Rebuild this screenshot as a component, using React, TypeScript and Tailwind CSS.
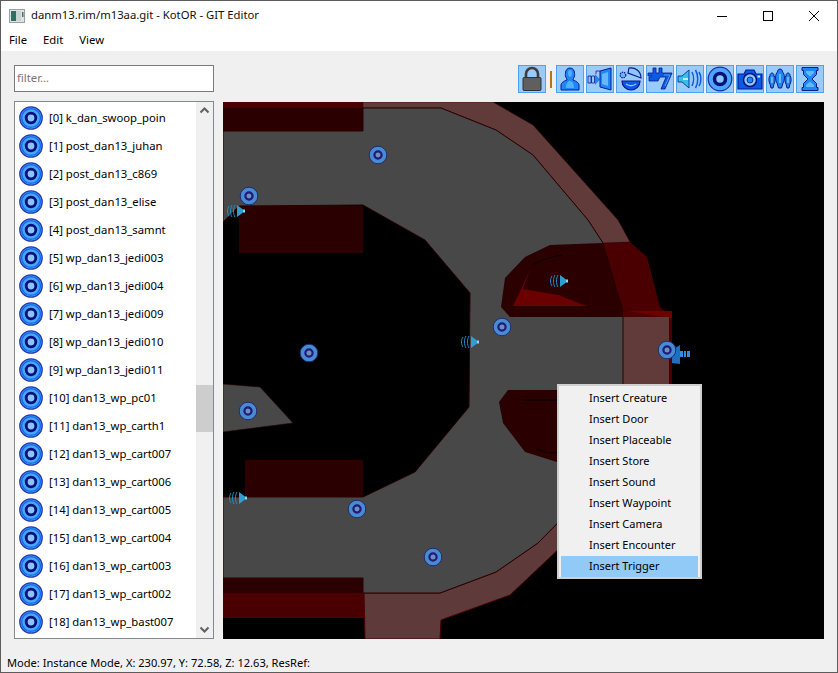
import { FC, ReactNode } from "react";

const rows = [
  "[0] k_dan_swoop_poin",
  "[1] post_dan13_juhan",
  "[2] post_dan13_c869",
  "[3] post_dan13_elise",
  "[4] post_dan13_samnt",
  "[5] wp_dan13_jedi003",
  "[6] wp_dan13_jedi004",
  "[7] wp_dan13_jedi009",
  "[8] wp_dan13_jedi010",
  "[9] wp_dan13_jedi011",
  "[10] dan13_wp_pc01",
  "[11] dan13_wp_carth1",
  "[12] dan13_wp_cart007",
  "[13] dan13_wp_cart006",
  "[14] dan13_wp_cart005",
  "[15] dan13_wp_cart004",
  "[16] dan13_wp_cart003",
  "[17] dan13_wp_cart002",
  "[18] dan13_wp_bast007",
];

const menuItems = [
  "Insert Creature",
  "Insert Door",
  "Insert Placeable",
  "Insert Store",
  "Insert Sound",
  "Insert Waypoint",
  "Insert Camera",
  "Insert Encounter",
  "Insert Trigger",
];

const waypoints = [
  [378, 155],
  [249, 196],
  [502, 327],
  [309, 353],
  [248, 411],
  [357, 509],
  [433, 557],
];

const sounds = [
  [235, 211],
  [469, 342],
  [558, 281],
  [237, 498],
];

const NAVY = "#0a1a8c";
const BLUE = "#0a5ae6";
const MID = "#1e86f5";
const LIGHT = "#4aa6f8";
const PALE = "#8cc8fb";

const Ring: FC<{ size: number }> = ({ size }) => (
  <svg width={size} height={size} viewBox="0 0 24 24">
    <circle cx="12" cy="12" r="11.2" fill={LIGHT} stroke="#2a3ab0" strokeWidth="1.3" />
    <circle cx="12" cy="12" r="9.4" fill="none" stroke="#0f6cf0" strokeWidth="1.4" />
    <circle cx="12" cy="12" r="4.8" fill="#8cc4fa" stroke="#00107a" strokeWidth="2.8" />
  </svg>
);

const ToolIcon: FC<{ children: ReactNode }> = ({ children }) => (
  <button className="flex h-[28px] w-[28px] items-center justify-center border border-[#4ba3f7] bg-[#9acbf8]">
    <svg width="26" height="26" viewBox="0 0 26 26">
      {children}
    </svg>
  </button>
);

const App: FC = () => {
  return (
    <div className="flex h-[673px] w-[838px] flex-col overflow-hidden border border-[#5c5c5c] bg-[#f0f0f0] text-[11.3px] text-black [font-family:'Noto_Sans',sans-serif]">
      {/* Title bar */}
      <div className="flex h-[29px] shrink-0 items-center bg-white">
        <svg width="16" height="14" viewBox="0 0 16 14" className="ml-[8px]">
          <rect x="0.5" y="0.5" width="15" height="13" fill="#dfe3e3" stroke="#9aa0a0" />
          <rect x="2" y="2" width="5" height="10" fill="#2f6f66" />
          <rect x="7" y="2" width="5" height="10" fill="#c7d3d0" />
          <rect x="13" y="3" width="1.5" height="5" fill="#47736b" />
        </svg>
        <span className="ml-[6px] text-[#101010]">danm13.rim/m13aa.git - KotOR - GIT Editor</span>
        <div className="ml-auto flex h-full">
          <div className="flex w-[46px] items-center justify-center">
            <svg width="10" height="10" viewBox="0 0 10 10">
              <path d="M0 5.5H10" stroke="#000" />
            </svg>
          </div>
          <div className="flex w-[46px] items-center justify-center">
            <svg width="10" height="10" viewBox="0 0 10 10">
              <rect x="0.5" y="0.5" width="9" height="9" fill="none" stroke="#000" />
            </svg>
          </div>
          <div className="flex w-[46px] items-center justify-center">
            <svg width="10" height="10" viewBox="0 0 10 10">
              <path d="M0 0 10 10M10 0 0 10" stroke="#000" />
            </svg>
          </div>
        </div>
      </div>

      {/* Menu bar */}
      <div className="flex h-[21px] shrink-0 items-center gap-[16px] bg-white pl-[8px]">
        <span>File</span>
        <span>Edit</span>
        <span>View</span>
      </div>

      <div className="flex min-h-0 flex-1 gap-[9px] pl-[13px] pr-[13px] pt-[14px]">
        {/* Left column */}
        <div className="flex w-[200px] shrink-0 flex-col gap-[9px]">
          <div className="flex h-[27px] items-center border border-[#7a7a7a] bg-white pl-[2px] text-[#757575]">
            filter…
          </div>
          <div className="flex h-[538px] border border-[#828790] bg-white">
            <div className="flex-1 overflow-hidden pl-[4px] pt-[2px]">
              {rows.map((row) => (
                <div key={row} className="flex h-[28px] items-center gap-[6px]">
                  <Ring size={24} />
                  <span className="whitespace-nowrap">{row}</span>
                </div>
              ))}
            </div>
            <div className="relative w-[17px] bg-[#f0f0f0]">
              <svg width="17" height="17" viewBox="0 0 17 17">
                <path d="M4.5 10.5 8.5 6.5 12.5 10.5" fill="none" stroke="#606060" strokeWidth="2" />
              </svg>
              <div className="absolute left-0 top-[283px] h-[47px] w-full bg-[#cdcdcd]" />
              <svg width="17" height="17" viewBox="0 0 17 17" className="absolute bottom-0 left-0">
                <path d="M4.5 6.5 8.5 10.5 12.5 6.5" fill="none" stroke="#606060" strokeWidth="2" />
              </svg>
            </div>
          </div>
        </div>

        {/* Right column */}
        <div className="flex w-[601px] shrink-0 flex-col gap-[9px]">
          <div className="flex h-[28px] items-center justify-end gap-[2px]">
            <ToolIcon>
              <path d="M7 12V8a6 6 0 0 1 12 0v4" fill="none" stroke="#3d3d3d" strokeWidth="2.6" />
              <rect x="4" y="11.5" width="18" height="13" rx="1" fill="#5f5f5f" stroke="#333" />
            </ToolIcon>
            <div className="mx-[2px] h-[17px] w-[2px] bg-[#b8720f]" />
            {/* Creature */}
            <ToolIcon>
              <path d="M4 24v-5c0-2 3-4 6-5 0-1-1-2-1.500-4-.5-1 0-2 0-3 0-3 2-5 4.500-5s4.500 2 4.500 5c0 1 .5 2 0 3-.5 2-1.500 3-1.500 4 3 1 6 3 6 5v5z" fill={MID} stroke={NAVY} strokeWidth="1" />
              <path d="M9 22c0-5 2-7 4-7s4 2 4 7zM11 7c0-2 1-3 2-3s2 1 2 3-1 4-2 4-2-2-2-4z" fill="#4fb0fb" />
            </ToolIcon>
            {/* Door */}
            <ToolIcon>
              <path d="M1 10h3v7H1zM4.500 10h3v7h-3z" fill={PALE} stroke={NAVY} strokeWidth="0.8" />
              <path d="M8 8l5 5.500-5 5.500z" fill={MID} />
              <path d="M13 5 24 2v22l-11-3z" fill={MID} stroke={NAVY} strokeWidth="1" />
              <path d="M15 8l6-2v14l-6-2z" fill="#66b8fb" />
              <path d="M9 5h4M9 5v3" fill="none" stroke={NAVY} strokeWidth="0.8" />
            </ToolIcon>
            {/* Placeable */}
            <ToolIcon>
              <path d="M5 15h18c0 5-4 9-9 9s-9-4-9-9z" fill={BLUE} stroke={NAVY} strokeWidth="1.2" />
              <path d="M12 2c6-1 12 3 12 10L11 7z" fill={PALE} stroke={NAVY} strokeWidth="1.2" />
              <circle cx="6" cy="9" r="2.800" fill="#66b8fb" stroke={NAVY} strokeWidth="1.200" strokeDasharray="1.500 0.800" />
              <path d="M9 18c3 2 7 2 10 0" fill="none" stroke={PALE} strokeWidth="1.500" />
            </ToolIcon>
            {/* Store */}
            <ToolIcon>
              <path d="M6 2h3v5h3V2h3v5h10l-7 16h-4l5-12h-6l-2 4H2v-4h2l1-1H1V7h5z" fill={BLUE} stroke={NAVY} strokeWidth="0.8" />
              <path d="M17 9h6l-5 11" fill="none" stroke={LIGHT} strokeWidth="1" />
            </ToolIcon>
            {/* Sound */}
            <ToolIcon>
              <path d="M1 10h4l7-6v18l-7-6H1z" fill="#35c0ea" stroke={NAVY} strokeWidth="0.8" />
              <path d="M6 13h5" stroke="#bdf0ff" strokeWidth="2" />
              <path d="M15 6c2 4 2 10 0 14M18.500 4c3 5 3 13 0 18M22 6c2.500 4 2.500 10 0 14" fill="none" stroke={BLUE} strokeWidth="1.500" />
            </ToolIcon>
            {/* Waypoint */}
            <ToolIcon>
              <circle cx="13" cy="13" r="11.800" fill={LIGHT} stroke="#1a2ca0" strokeWidth="1.200" />
              <circle cx="13" cy="13" r="5.500" fill={PALE} stroke="#00107a" strokeWidth="3.500" />
            </ToolIcon>
            {/* Camera */}
            <ToolIcon>
              <path d="M1 8h6l2-4h8l2 4h6v15H1z" fill={BLUE} stroke={NAVY} strokeWidth="1.200" />
              <circle cx="13" cy="14" r="6.500" fill={PALE} stroke="#00107a" strokeWidth="1.500" />
              <circle cx="13" cy="14" r="3" fill={MID} stroke={NAVY} strokeWidth="0.800" />
              <rect x="20.500" y="9.500" width="2.500" height="2" fill="#d8ecff" />
            </ToolIcon>
            {/* Encounter */}
            <ToolIcon>
              <path d="M13 3c1.500 0 2.500 1.500 2.500 3 2.500 2 2.500 8 .5 11l-1.500 5h-3L10 17c-2-3-2-9 .5-11 0-1.500 1-3 2.500-3z" fill={MID} stroke={NAVY} strokeWidth="1" />
              <path d="M5 7c1 0 2 1 2 2.500 1.500 2 1.500 6 0 8.500l-1 4H4l-1-4c-1.500-2.500-1.500-6.500 0-8.500C3 8 4 7 5 7zM21 7c1 0 2 1 2 2.500 1.500 2 1.500 6 0 8.500l-1 4h-2l-1-4c-1.500-2.500-1.500-6.500 0-8.500C19 8 20 7 21 7z" fill={MID} stroke={NAVY} strokeWidth="1" />
              <path d="M13 8v9M5 11v6M21 11v6" stroke={PALE} strokeWidth="1.500" />
            </ToolIcon>
            {/* Trigger */}
            <ToolIcon>
              <path d="M5 1.500h16v3h-1.500v4L15 13l4.500 4.500v4H21v3H5v-3h1.500v-4L11 13 6.500 8.500v-4H5z" fill={MID} stroke={NAVY} strokeWidth="1" />
              <path d="M9 5h8v2l-4 3.500L9 7zM9 21v-2l4-3.500 4 3.500v2z" fill="#66b8fb" />
            </ToolIcon>
          </div>

          {/* Map view */}
          <div className="relative h-[537px] w-[601px] bg-black">
            <svg width="601" height="537" viewBox="223 102 601 537" className="block">
              {/* red shell */}
              <path d="M223 102H363V131H223z" fill="#2a0000" />
              <path d="M223 102H363V108H223z" fill="#4a0000" />
              <path d="M603 243 630 242 647 257 660 307 672 317V384H623V310z" fill="#4a0000" />
              <path d="M628 311 672 311 672 318z" fill="#700000" />
              <path d="M223 578H363V593H223z" fill="#2a0000" />
              <path d="M223 593H365V618H223z" fill="#4a0000" />
              {/* pink band */}
              <path d="M363 102H493L533 125 618 220 630 242 603 243 588 220 533 155 496 130 441 108H363z" fill="#613a3a" stroke="#3a0000" strokeWidth="0.5" />
              <path d="M623 317H669V384H623z" fill="#613a3a" />
              <path d="M364 593H440L496 572 538 543 600 480 600 510 510 595 441 620 440 639H365z" fill="#5e3a3a" stroke="#4a0000" strokeWidth="1" />
              {/* walkable floor */}
              <path
                d="M223 131H363V108H441L496 130 533 155 588 220 603 243 623 317V470L600 480 538 543 496 572 440 593H363L363 578H223V497H363L415 472 469 407 470 293 425 240 363 205 239 206 223 222z"
                fill="#484848"
                stroke="#2a0000"
                strokeWidth="1"
              />
              <path d="M223 384 260 387 293 423 223 432z" fill="#484848" stroke="#2a0000" strokeWidth="0.6" />
              {/* wall blocks */}
              <path d="M239 206H363V253H239z" fill="#2a0000" />
              <path d="M245 460H363V497H245z" fill="#2a0000" />
              {/* upper pocket */}
              <path d="M550 245 603 243 623 310V317H510L501 307 505 278 525 257z" fill="#2a0000" />
              <path d="M530 270 513 306H587L558 295 523 289z" fill="#6b0000" />
              <path d="M533 265C545 258 552 257 562 255" fill="none" stroke="#000" strokeWidth="0.8" />
              {/* lower pocket */}
              <path d="M508 390H623V470L557 462 525 452 503 423 499 402z" fill="#2a0000" />
              <path d="M523 400H600" stroke="#000" strokeWidth="1" />
              <path d="M536 449C545 452 550 454 560 452" fill="none" stroke="#000" strokeWidth="0.8" />

              {/* sound markers */}
              {sounds.map(([x, y]) => (
                <g key={`${x}-${y}`} transform={`translate(${x} ${y})`}>
                  <path d="M2 -6 8 -1.500V1.500L2 6z" fill="#2f9fd0" />
                  <path d="M8 -1.500H10V1.500H8z" fill="#8fd4f0" />
                  <path d="M0 -6C-2 -3 -2 3 0 6M-3 -6C-5 -3 -5 3 -3 6M-6 -5C-8 -2 -8 2 -6 5" fill="none" stroke="#1f8fd0" strokeWidth="1" />
                </g>
              ))}
              <g>
                <path d="M672 350 680 345V364L672 363z" fill="#1e6fc0" />
                <path d="M680 351h3v6h-3zM684 351h2v6h-2zM687 351h3v6h-3z" fill="#2f8fe0" />
              </g>

              {/* waypoint markers */}
              {[...waypoints, [667, 350]].map(([x, y]) => (
                <g key={`${x}-${y}`}>
                  <circle cx={x} cy={y} r="8.800" fill="#4a8ad0" stroke="#1c2c78" strokeWidth="1" />
                  <circle cx={x} cy={y} r="3.600" fill="#6f8fc0" stroke="#1e1c78" strokeWidth="2.200" />
                </g>
              ))}
            </svg>

            {/* Context menu */}
            <div className="absolute left-[334px] top-[282px] h-[195px] w-[145px] border-2 border-[#cfcfcf] bg-[#f0f0f0] p-[2px] text-[11px]">
              {menuItems.map((item) => (
                <div
                  key={item}
                  className={
                    item === "Insert Trigger"
                      ? "flex h-[21px] items-center bg-[#91c9f7] pl-[28px]"
                      : "flex h-[21px] items-center pl-[28px]"
                  }
                >
                  {item}
                </div>
              ))}
            </div>
          </div>
        </div>
      </div>

      {/* Status bar */}
      <div className="flex h-[18px] shrink-0 items-center pl-[6px] text-[11.1px]">
        Mode: Instance Mode, X: 230.97, Y: 72.58, Z: 12.63, ResRef:
      </div>
    </div>
  );
};

export default App;
